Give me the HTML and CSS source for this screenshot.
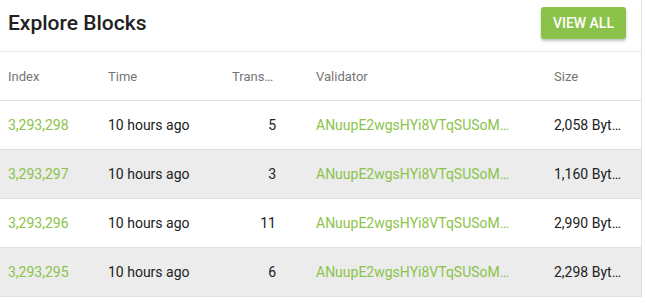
FILE: index.html
```html
<!DOCTYPE html>
<html lang="en">
<head>
  <meta charset="UTF-8">
  <title>Explore Blocks</title>
  <link rel="stylesheet" href="styles.css">
</head>
<body>
  <div class="card">
    <div class="card-head">
      <h2 class="title">Explore Blocks</h2>
      <button class="view-all">VIEW ALL</button>
    </div>
    <div class="row head">
      <div class="cell c-index">Index</div>
      <div class="cell c-time">Time</div>
      <div class="cell c-tx">Transactions</div>
      <div class="cell c-val">Validator</div>
      <div class="cell c-size">Size</div>
    </div>
    <div class="row">
      <div class="cell c-index link">3,293,298</div>
      <div class="cell c-time">10 hours ago</div>
      <div class="cell c-tx">5</div>
      <div class="cell c-val link">ANuupE2wgsHYi8VTqSUSoMjfRZ5qNdTPZ</div>
      <div class="cell c-size">2,058 Bytes</div>
    </div>
    <div class="row">
      <div class="cell c-index link">3,293,297</div>
      <div class="cell c-time">10 hours ago</div>
      <div class="cell c-tx">3</div>
      <div class="cell c-val link">ANuupE2wgsHYi8VTqSUSoMjfRZ5qNdTPZ</div>
      <div class="cell c-size">1,160 Bytes</div>
    </div>
    <div class="row">
      <div class="cell c-index link">3,293,296</div>
      <div class="cell c-time">10 hours ago</div>
      <div class="cell c-tx">11</div>
      <div class="cell c-val link">ANuupE2wgsHYi8VTqSUSoMjfRZ5qNdTPZ</div>
      <div class="cell c-size">2,990 Bytes</div>
    </div>
    <div class="row">
      <div class="cell c-index link">3,293,295</div>
      <div class="cell c-time">10 hours ago</div>
      <div class="cell c-tx">6</div>
      <div class="cell c-val link">ANuupE2wgsHYi8VTqSUSoMjfRZ5qNdTPZ</div>
      <div class="cell c-size">2,298 Bytes</div>
    </div>
  </div>
</body>
</html>
```

FILE: styles.css
```css
body { margin: 0; background: #fff; font-family: Roboto, "Liberation Sans", sans-serif; color: #212121; }
.card { width: 641px; border-right: 1px solid #e0e0e0; background: #fff; }
.card-head { display: flex; justify-content: space-between; align-items: flex-start; height: 44px; padding: 7px 15px 0 8px; border-bottom: 1px solid #ebebeb; }
.title { margin: 4px 0 0; font-size: 21px; font-weight: 500; color: #212121; }
.view-all { height: 32px; padding: 0 12px; background: #8bc34a; color: #fff; border: none; border-radius: 3px; font-family: inherit; font-size: 14px; font-weight: 500; box-shadow: 0 2px 3px rgba(0,0,0,0.25); cursor: pointer; }
.row { display: grid; grid-template-columns: 100px 127px 57px 262px 95px; align-items: center; height: 48px; border-bottom: 1px solid #e0e0e0; font-size: 14px; }
.row:nth-child(even) { background: #ececec; }
.row.head { background: #fff; font-size: 13px; color: #757575; }
.cell { padding: 0 8px; white-space: nowrap; overflow: hidden; text-overflow: ellipsis; }
.c-tx { text-align: right; padding-left: 5px; }
.c-val { padding-left: 32px; padding-right: 34px; }
.c-size { padding-right: 16px; }
.link { color: #8bc34a; }
```
